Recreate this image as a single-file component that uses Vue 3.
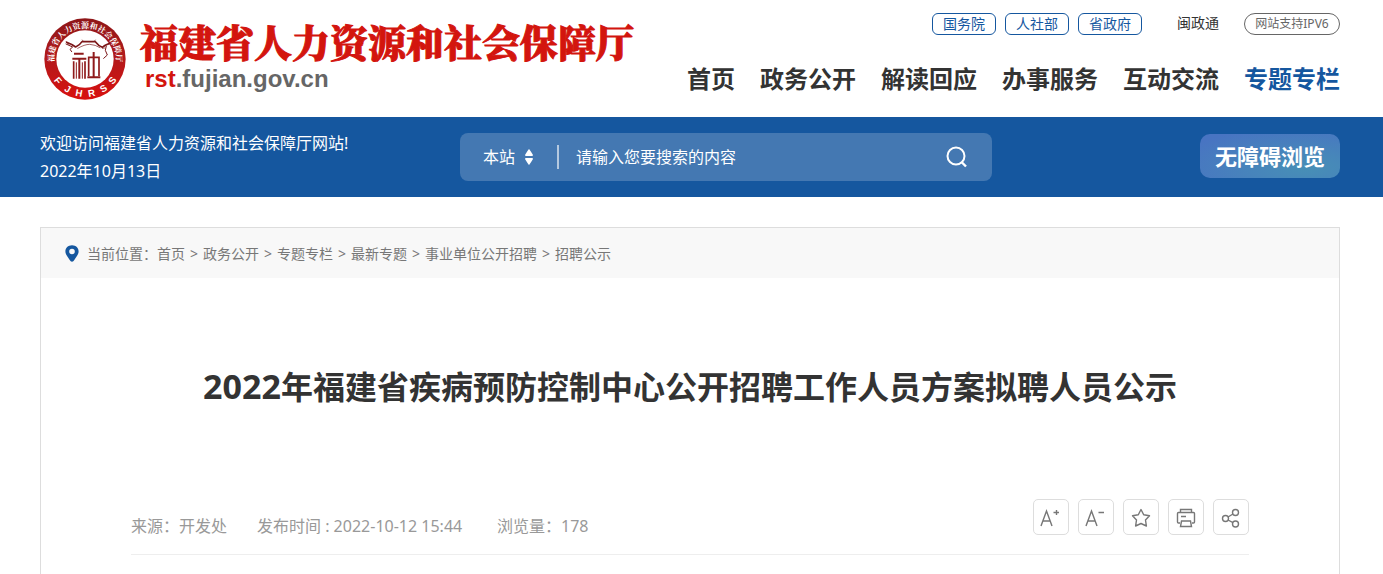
<script setup>
import { ref } from 'vue'

const departments = ['国务院', '人社部', '省政府']
const navItems = ['首页', '政务公开', '解读回应', '办事服务', '互动交流', '专题专栏']
const activeNav = '专题专栏'
const crumbs = ['首页', '政务公开', '专题专栏', '最新专题', '事业单位公开招聘', '招聘公示']
const sealLetters = [
  { char: 'F', angle: 51 },
  { char: 'J', angle: 30 },
  { char: 'H', angle: 10 },
  { char: 'R', angle: -11 },
  { char: 'S', angle: -32 },
  { char: 'S', angle: -52 },
]
const scope = ref('本站')
const keyword = ref('')
</script>

<template>
  <div class="page">
    <header class="header">
      <a class="brand" href="#">
        <svg class="seal" viewBox="18 18 246 246" aria-hidden="true">
          <defs>
            <linearGradient id="sealRed" x1="0" y1="0" x2="0" y2="1">
              <stop offset="0" stop-color="#8e1618" />
              <stop offset="0.45" stop-color="#b01a1c" />
              <stop offset="1" stop-color="#d8100f" />
            </linearGradient>
            <path id="sealArc" d="M141 234 A93 93 0 1 1 141.1 234" />
          </defs>
          <circle cx="141" cy="141" r="122" fill="url(#sealRed)" />
          <circle cx="141" cy="141" r="86" fill="#fff" />
          <text class="seal-cn" text-anchor="middle">
            <textPath href="#sealArc" startOffset="50%">福建省人力资源和社会保障厅</textPath>
          </text>
          <text
            v-for="(l, i) in sealLetters"
            :key="i"
            class="seal-en"
            x="141"
            y="255"
            text-anchor="middle"
            :transform="`rotate(${l.angle} 141 141)`"
          >{{ l.char }}</text>
          <g fill="none" stroke="#7c1719" stroke-linecap="round" stroke-linejoin="round">
            <path stroke-width="5" d="M86 91 Q104 98 113 105 Q125 100 132 89 L172 89 Q181 101 193 106 Q206 96 214 95" />
            <path stroke-width="3" d="M85 89 L92 97 M84 96 L104 105 L96 112 L101 119 M205 102 L202 115 L208 129 L197 139" />
            <path stroke-width="2" d="M119 109 Q140 97 155 97 Q172 98 186 107 M133 84 L137 89 M172 84 L168 89 M193 109 L201 108" />
          </g>
          <g fill="none" stroke="#8f1a1b">
            <path stroke-width="6" d="M108 125 H137 M103 140 H145 M124 140 V200" />
            <path stroke-width="5" d="M107 148 V200 M141 148 V200" />
            <path stroke-width="3" d="M115 151 V200 M133 151 V200" />
            <path stroke-width="6" d="M167 120 V195 M148 196 H187" />
            <path stroke-width="5" d="M152 192 V136 H183 V192" />
          </g>
        </svg>
        <span class="brand-text">
          <span class="brand-name">福建省人力资源和社会保障厅</span>
          <span class="brand-url"><b>rst</b>.fujian.gov.cn</span>
        </span>
      </a>
      <div class="header-right">
        <div class="top-links">
          <a v-for="d in departments" :key="d" class="dept" href="#">{{ d }}</a>
          <a class="mzt" href="#">闽政通</a>
          <a class="ipv6" href="#">网站支持IPV6</a>
        </div>
        <nav class="nav">
          <a v-for="n in navItems" :key="n" href="#" :class="{ active: n === activeNav }">{{ n }}</a>
        </nav>
      </div>
    </header>

    <section class="banner">
      <div class="welcome">
        <p>欢迎访问福建省人力资源和社会保障厅网站!</p>
        <p>2022年10月13日</p>
      </div>
      <form class="search" @submit.prevent>
        <div class="scope">
          <select v-model="scope" aria-label="搜索范围">
            <option>本站</option>
          </select>
          <svg width="8" height="16" viewBox="0 0 8 16" aria-hidden="true">
            <path fill="#fff" d="M4 0 Q5 1 8 6 Q8 7 7 7 H1 Q0 7 0 6 Q3 1 4 0Z M4 16 Q3 15 0 10 Q0 9 1 9 H7 Q8 9 8 10 Q5 15 4 16Z" />
          </svg>
        </div>
        <input v-model="keyword" type="text" placeholder="请输入您要搜索的内容" aria-label="搜索内容" />
        <button class="search-btn" type="submit" aria-label="搜索">
          <svg width="22" height="22" viewBox="0 0 22 22" aria-hidden="true">
            <circle cx="10" cy="10" r="8.5" fill="none" stroke="#fff" stroke-width="2" />
            <path d="M15.5 16 L20 20.5" stroke="#fff" stroke-width="2.4" />
          </svg>
        </button>
      </form>
      <button class="accessible" type="button">无障碍浏览</button>
    </section>

    <main class="card">
      <div class="crumbs">
        <svg width="14" height="17" viewBox="0 0 14 17" aria-hidden="true">
          <path fill="#15579f" fill-rule="evenodd" d="M7 0.2 C3 0.2 0.4 3 0.4 6.4 C0.4 9.5 3 12 4.7 15 Q5.6 16.8 7 16.8 Q8.4 16.8 9.3 15 C11 12 13.6 9.5 13.6 6.4 C13.6 3 11 0.2 7 0.2Z M7 3.7 A2.8 2.8 0 1 1 7 9.3 A2.8 2.8 0 1 1 7 3.7Z" />
        </svg>
        <span>当前位置：</span>
        <template v-for="(c, i) in crumbs" :key="c">
          <span v-if="i" class="sep">&gt;</span>
          <a href="#">{{ c }}</a>
        </template>
      </div>

      <article class="article">
        <h1><span class="year">2022</span>年福建省疾病预防控制中心公开招聘工作人员方案拟聘人员公示</h1>
        <div class="meta">
          <span>来源：开发处</span>
          <span class="published">发布时间 : 2022-10-12 15:44</span>
          <span>浏览量：178</span>
          <div class="tools">
            <button type="button" aria-label="放大字体">
              <svg viewBox="0 0 36 36" aria-hidden="true">
                <path d="M8 27 L13.5 12 L19 27 M9.8 22 H17.2 M20.5 13.5 H26 M23.5 11 V16" />
              </svg>
            </button>
            <button type="button" aria-label="缩小字体">
              <svg viewBox="0 0 36 36" aria-hidden="true">
                <path d="M8 27 L13.5 12 L19 27 M9.8 22 H17.2 M20.5 13.5 H26" />
              </svg>
            </button>
            <button type="button" aria-label="收藏">
              <svg viewBox="0 0 36 36" aria-hidden="true">
                <path stroke-linejoin="round" d="M18 10.5 L20.7 15.8 L26.5 16.8 L22.5 21 L23.4 27 L18 24.5 L12.6 27 L13.5 21 L9.5 16.8 L15.3 15.8 Z" />
              </svg>
            </button>
            <button type="button" aria-label="打印">
              <svg viewBox="0 0 36 36" aria-hidden="true">
                <path d="M12.5 13.5 V10.5 H23.5 V13.5 M12 24 H10.5 Q9.5 24 9.5 23 V14.5 Q9.5 13.5 10.5 13.5 H25.5 Q26.5 13.5 26.5 14.5 V23 Q26.5 24 25.5 24 H24 M13 17.5 H18 M13.5 22 H22.5 L23.5 27.5 H12.5 Z" />
              </svg>
            </button>
            <button type="button" aria-label="分享">
              <svg viewBox="0 0 36 36" aria-hidden="true">
                <circle cx="12.5" cy="19.5" r="3" />
                <circle cx="22.5" cy="13.5" r="3" />
                <circle cx="22.5" cy="25" r="3" />
                <path d="M15 18 L20 15 M15 21 L20 23.6" />
              </svg>
            </button>
          </div>
        </div>
      </article>
    </main>
  </div>
</template>

<style>
body {
  background: #fff;
}
</style>

<style scoped>
.page {
  display: flex;
  flex-direction: column;
  min-height: 100vh;
  font-family: "Noto Sans", "Noto Sans CJK SC", sans-serif;
  color: #333;
}
.page * {
  box-sizing: border-box;
}
a {
  color: inherit;
  text-decoration: none;
}
p,
h1 {
  margin: 0;
}
button,
input,
select {
  font: inherit;
  color: inherit;
  padding: 0;
  border: 0;
  background: none;
}
svg {
  display: block;
  flex: none;
}
.header {
  display: flex;
  justify-content: space-between;
  align-items: flex-start;
  padding: 13px 43px 17px 44px;
}
.brand {
  display: flex;
  gap: 14px;
  padding-top: 5px;
}
.seal {
  width: 82px;
  height: 82px;
}
.seal-cn {
  font-family: "Noto Serif CJK SC", "Noto Sans CJK SC", serif;
  font-size: 24px;
  font-weight: 700;
  fill: #fff;
}
.seal-en {
  font-family: "Liberation Sans", sans-serif;
  font-size: 29px;
  font-weight: 700;
  fill: #fff;
}
.brand-text {
  display: flex;
  flex-direction: column;
}
.brand-name {
  font-family: "Noto Serif CJK SC", "Noto Sans CJK SC", serif;
  font-size: 38px;
  font-weight: 900;
  line-height: 46px;
  white-space: nowrap;
  color: #d3150e;
  -webkit-text-stroke: 1px #d3150e;
}
.brand-url {
  padding-left: 5px;
  font-family: "Liberation Sans", Arial, sans-serif;
  font-size: 24px;
  font-weight: 700;
  line-height: 30px;
  color: #666;
}
.brand-url b {
  color: #d3150e;
}
.header-right {
  display: flex;
  flex-direction: column;
  align-items: flex-end;
  gap: 26px;
}
.top-links {
  display: flex;
  font-size: 14px;
  line-height: 20px;
}
.dept {
  width: 64px;
  margin-right: 9px;
  border: 1px solid #15579f;
  border-radius: 6px;
  text-align: center;
  color: #15579f;
}
.mzt {
  margin: 0 25px 0 26px;
}
.ipv6 {
  width: 96px;
  border: 1px solid #666;
  border-radius: 11px;
  font-size: 12px;
  text-align: center;
  white-space: nowrap;
  color: #666;
}
.nav {
  display: flex;
  gap: 25px;
  padding-bottom: 3px;
  font-size: 24px;
  font-weight: 700;
  line-height: 36px;
  white-space: nowrap;
}
.nav .active {
  color: #15579f;
}
.banner {
  display: grid;
  grid-template-columns: 420fr 532fr 348fr;
  align-items: center;
  padding: 12px 43px 12px 40px;
  background: #15579f;
  color: #fff;
}
.welcome {
  font-size: 16px;
  line-height: 28px;
  white-space: nowrap;
}
.search {
  display: flex;
  align-items: center;
  height: 48px;
  border-radius: 8px;
  background: #4478b2;
  font-size: 16px;
}
.scope {
  display: flex;
  align-items: center;
  gap: 10px;
  height: 24px;
  padding: 0 24px 0 23px;
  border-right: 2px solid #b4c9e0;
}
.scope select {
  width: 32px;
  appearance: none;
  outline: none;
}
.search input {
  flex: 1;
  min-width: 0;
  padding-left: 17px;
  line-height: 24px;
  outline: none;
}
.search input::placeholder {
  color: #fff;
  opacity: 1;
}
.search-btn {
  margin-right: 24px;
}
.accessible {
  justify-self: end;
  width: 140px;
  height: 44px;
  margin-bottom: 2px;
  padding-bottom: 2px;
  border-radius: 10px;
  background: radial-gradient(ellipse at 76% 78%, #478fb6 0%, #4784bb 38%, #4874c2 88%);
  font-size: 22px;
  font-weight: 700;
}
.card {
  flex: 1;
  margin: 30px 43px 0 40px;
  border: 1px solid #ddd;
  border-bottom: 0;
}
.crumbs {
  display: flex;
  align-items: center;
  height: 50px;
  padding-left: 24px;
  background: #f8f8f8;
  font-size: 14px;
  white-space: nowrap;
  color: #777;
}
.crumbs svg {
  margin-right: 8px;
}
.sep {
  padding: 0 5px;
}
.article {
  padding: 84px 90px 0;
}
h1 {
  font-size: 32px;
  line-height: 48px;
  text-align: center;
}
.year {
  font-size: 34px;
}
.meta {
  display: flex;
  align-items: flex-start;
  gap: 30px;
  margin-top: 88px;
  padding-bottom: 16px;
  border-bottom: 1px solid #eee;
  font-size: 16px;
  line-height: 24px;
  white-space: nowrap;
  color: #999;
}
.meta > span {
  padding-top: 15px;
}
.published {
  min-width: 210px;
}
.tools {
  display: flex;
  gap: 9px;
  margin-left: auto;
}
.tools button {
  width: 36px;
  height: 36px;
  border: 1px solid #ddd;
  border-radius: 5px;
}
.tools svg {
  width: 36px;
  height: 36px;
  margin: -1px;
  fill: none;
  stroke: #777;
  stroke-width: 1.4;
}
</style>
